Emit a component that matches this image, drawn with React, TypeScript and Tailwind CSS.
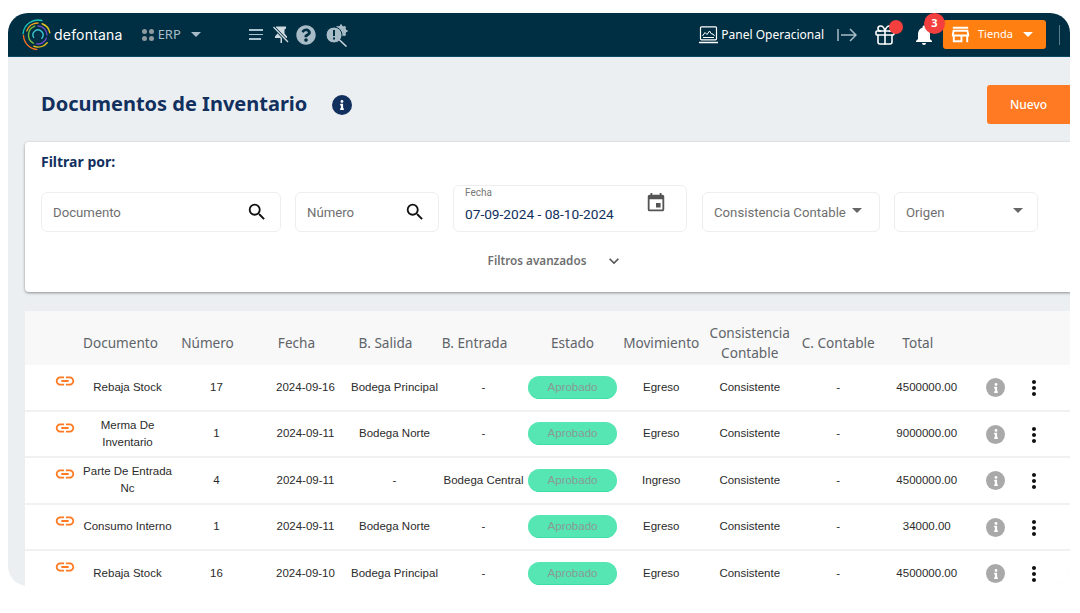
import type { ReactNode } from "react";
import { Gift } from "lucide-react";
import { MdSearch, MdEvent, MdLink, MdMoreVert, MdOutlineStore, MdKeyboardArrowDown, MdNotifications } from "react-icons/md";
import { FaQuestionCircle, FaInfo } from "react-icons/fa";

const rows = [
  { doc: "Rebaja Stock", num: "17", fecha: "2024-09-16", salida: "Bodega Principal", entrada: "-", mov: "Egreso", total: "4500000.00" },
  { doc: "Merma De Inventario", num: "1", fecha: "2024-09-11", salida: "Bodega Norte", entrada: "-", mov: "Egreso", total: "9000000.00" },
  { doc: "Parte De Entrada Nc", num: "4", fecha: "2024-09-11", salida: "-", entrada: "Bodega Central", mov: "Ingreso", total: "4500000.00" },
  { doc: "Consumo Interno", num: "1", fecha: "2024-09-11", salida: "Bodega Norte", entrada: "-", mov: "Egreso", total: "34000.00" },
  { doc: "Rebaja Stock", num: "16", fecha: "2024-09-10", salida: "Bodega Principal", entrada: "-", mov: "Egreso", total: "4500000.00" },
];

const cols = "grid grid-cols-[58px_repeat(6,89px)_repeat(4,88.5px)_49px_28px] items-center";

// arc around the logo centre, angles in degrees (0 = right, clockwise)
const arc = (r: number, from: number, to: number) => {
  const p = (a: number) => `${16 + r * Math.cos((a * Math.PI) / 180)} ${16 + r * Math.sin((a * Math.PI) / 180)}`;
  return `M${p(from)} A${r} ${r} 0 ${to - from > 180 ? 1 : 0} 1 ${p(to)}`;
};

const Logo = () => (
  <svg width="32" height="32" viewBox="0 0 32 32" fill="none" strokeLinecap="round" strokeWidth="1.4">
    <path d={arc(15, 185, 285)} stroke="#1cc4b8" />
    <path d={arc(14.5, 95, 178)} stroke="#f2701d" />
    <path d={arc(12, 290, 350)} stroke="#e8c51e" />
    <path d={arc(12, 200, 270)} stroke="#f2a01d" />
    <path d={arc(12, 40, 110)} stroke="#e8c51e" />
    <path d={arc(9.5, 120, 250)} stroke="#7fbf3f" />
    <path d={arc(9, 270, 360)} stroke="#6d4bc4" />
    <path d={arc(9, 20, 100)} stroke="#6d4bc4" />
    <path d={arc(5, 150, 400)} stroke="#3fc4cf" />
  </svg>
);

const PinOffIcon = () => (
  <svg width="16" height="17" viewBox="0 0 16 17" className="ml-[10px]">
    <path d="M3 0.5h10v2l-1.5 1v4l2.5 3v1.5H9v5H7.5v-5H2V10.5l2.5-3v-4L3 2.5z" fill="#d0dbe1" />
    <path d="M0.5 1L15 16" stroke="#002e42" strokeWidth="3" />
    <path d="M0.5 1L15 16" stroke="#d0dbe1" strokeWidth="1.3" />
  </svg>
);

const GearSearchIcon = () => (
  <svg width="26" height="24" viewBox="0 0 26 24" className="ml-[8px]">
    <circle cx="17" cy="8" r="4.2" fill="none" stroke="#a8bcc8" strokeWidth="2.4" />
    <path d="M17 1.5v13M10.5 8h13M12.5 3.5l9 9M21.5 3.5l-9 9" stroke="#a8bcc8" strokeWidth="2" />
    <circle cx="10" cy="12" r="8" fill="#a8bcc8" stroke="#002e42" strokeWidth="1" />
    <path d="M10 7v6M10 14.6v2" stroke="#002e42" strokeWidth="2" />
    <path d="M15.5 17l7 6.5" stroke="#c9d6dd" strokeWidth="1.6" />
  </svg>
);

const PanelIcon = () => (
  <svg width="19" height="18" viewBox="0 0 19 18" fill="none" stroke="#fff" strokeWidth="1.2">
    <rect x="1.5" y="0.8" width="16" height="13" rx="1" />
    <path d="M3.5 10l2.5-3.5 2 2 2.5-3.5 2 3h1.5l1.5 2M4 11.5h11" strokeWidth="1" />
    <path d="M0 16.5h19" strokeWidth="1.6" />
  </svg>
);

const FilterBox = ({ className, children }: { className: string; children: ReactNode }) => (
  <div className={`h-10 rounded-md border border-[#eeeeee] bg-white flex items-center font-['Roboto',sans-serif] text-[13.2px] text-[#6f6f6f] ${className}`}>
    {children}
  </div>
);

export default function App() {
  return (
    <div className="w-[1080px] h-[613px] bg-white pt-[13px] pl-2 overflow-hidden">
      <div className="w-[1062px] h-[573px] rounded-[20px] overflow-hidden bg-[#ebeff2] flex flex-col">
        {/* top bar */}
        <header className="h-11 shrink-0 bg-[#002e42] border-b border-[#0a4a63] flex items-center text-white font-['Noto_Sans',sans-serif]">
          <div className="ml-[14px]"><Logo /></div>
          <span className="text-[14px] font-['Inter',sans-serif] tracking-[0.2px]">defontana</span>
          <div className="ml-[19px] grid grid-cols-2 gap-[2px]">
            <span className="w-[5px] h-[5px] rounded-full bg-[#8f9a9f]" />
            <span className="w-[5px] h-[5px] rounded-full bg-[#8f9a9f]" />
            <span className="w-[5px] h-[5px] rounded-full bg-[#8f9a9f]" />
            <span className="w-[5px] h-[5px] rounded-full bg-[#8f9a9f]" />
          </div>
          <span className="ml-[4px] text-[13px] text-[#a8bcc8]">ERP</span>
          <span className="ml-[10px] w-0 h-0 border-x-[5.5px] border-x-transparent border-t-[5.5px] border-t-[#a8bcc8]" />
          <div className="ml-[48px] w-[14px] flex flex-col gap-[3px]">
            <span className="h-[1.5px] bg-[#a8c4d0]" />
            <span className="h-[1.5px] bg-[#a8c4d0]" />
            <span className="h-[1.5px] w-[12px] bg-[#a8c4d0]" />
          </div>
          <PinOffIcon />
          <FaQuestionCircle size={20} className="ml-[7px] text-[#a8bcc8]" />
          <GearSearchIcon />
          <div className="flex-1" />
          <PanelIcon />
          <span className="ml-[3px] text-[12px] text-white">Panel Operacional</span>
          <svg width="20" height="14" viewBox="0 0 20 14" className="ml-[13px]" fill="none" stroke="#a8bcc8" strokeWidth="1.5"><path d="M1 1v12M4 7h15M13 1l6 6-6 6" /></svg>
          <div className="relative ml-[16px]">
            <Gift size={24} strokeWidth={1.6} />
            <span className="absolute -top-[3px] left-[16px] w-[14px] h-[14px] rounded-full bg-[#f43f3f]" />
          </div>
          <div className="relative ml-[15px]">
            <MdNotifications size={24} />
            <span className="absolute -top-[10px] left-[12px] w-[21px] h-[21px] rounded-full bg-[#f43f3f] text-[11px] font-bold flex items-center justify-center">3</span>
          </div>
          <button className="ml-[7px] w-[103px] h-[29px] rounded-[3px] bg-[#ff7f11] flex items-center pl-[6px] text-[11px]">
            <MdOutlineStore size={23} />
            <span className="ml-[6px]">Tienda</span>
            <span className="ml-[10px] w-0 h-0 border-x-[5.5px] border-x-transparent border-t-[5.5px] border-t-white" />
          </button>
          <span className="ml-[13px] w-px h-5 bg-[#5c7c8c]" />
          <div className="w-[10px]" />
        </header>

        {/* title */}
        <div className="h-[85px] shrink-0 flex items-start relative font-['Noto_Sans',sans-serif]">
          <h1 className="ml-[33px] mt-[32px] text-[20px] font-bold text-[#12305e]">Documentos de Inventario</h1>
          <span className="ml-[25px] mt-[38px] w-5 h-5 rounded-full bg-[#12305e] text-white flex items-center justify-center"><FaInfo size={10} /></span>
          <div className="flex-1" />
          <button className="mt-[28px] w-[83px] h-[39px] rounded-l-[3px] bg-[#ff7a22] text-white text-[12px] font-medium">Nuevo</button>
        </div>

        {/* filters */}
        <section className="ml-[17px] w-[1060px] h-[150px] shrink-0 rounded-l-[4px] bg-white shadow-[0_1px_3px_rgba(0,0,0,0.4)] pl-[16px] pt-[9px]">
          <h2 className="font-['Noto_Sans',sans-serif] text-[14px] font-bold text-[#12305e]">Filtrar por:</h2>
          <div className="mt-[13px] flex items-end h-[47px]">
            <FilterBox className="w-[240px] pl-[11px] pr-[12px] justify-between">
              <span className="mt-[2px]">Documento</span><MdSearch size={22} className="text-[#111]" />
            </FilterBox>
            <FilterBox className="ml-[14px] w-[144px] pl-[11px] pr-[12px] justify-between">
              <span className="mt-[2px]">Número</span><MdSearch size={22} className="text-[#111]" />
            </FilterBox>
            <div className="ml-[14px] w-[234px] h-[47px] relative rounded-md border border-[#eeeeee] font-['Roboto',sans-serif] pl-[11px]">
              <div className="-mt-[1px] text-[10px] text-[#777]">Fecha</div>
              <div className="mt-[4px] text-[13.7px] text-[#12305e]">07-09-2024 - 08-10-2024</div>
              <MdEvent size={22} className="absolute right-[19px] top-[6px] text-[#555]" />
            </div>
            <FilterBox className="ml-[15px] w-[178px] pl-[11px] relative">
              <span className="mt-[2px]">Consistencia Contable</span>
              <span className="ml-[6px] -mt-[4px] w-0 h-0 border-x-[5px] border-x-transparent border-t-[5px] border-t-[#666]" />
            </FilterBox>
            <FilterBox className="ml-[14px] w-[144px] pl-[11px] justify-between pr-[14px]">
              <span className="mt-[2px]">Origen</span>
              <span className="-mt-[4px] w-0 h-0 border-x-[5px] border-x-transparent border-t-[5px] border-t-[#666]" />
            </FilterBox>
          </div>
          <div className="mt-[19px] flex items-center w-[1030px] justify-center font-['Noto_Sans',sans-serif] text-[11.7px] font-semibold text-[#6f6f6f]">
            <span>Filtros avanzados</span>
            <MdKeyboardArrowDown size={20} className="ml-[18px] text-[#555]" />
          </div>
        </section>

        {/* table */}
        <section className="ml-[17px] mt-[19px] w-[1060px] flex-1 bg-white">
          <div className={`${cols} h-[54px] pt-[10px] bg-[#f8f8f8] font-['Noto_Sans',sans-serif] text-[13.6px] leading-[20px] text-[#5f6468] text-center`}>
            <span />
            <span className="pr-[18px]">Documento</span>
            <span className="pr-[18px]">Número</span>
            <span className="pr-[18px]">Fecha</span>
            <span className="pr-[18px]">B. Salida</span>
            <span className="pr-[18px]">B. Entrada</span>
            <span>Estado</span>
            <span>Movimiento</span>
            <span>Consistencia Contable</span>
            <span>C. Contable</span>
            <span className="pr-[18px]">Total</span>
          </div>
          {rows.map((r, i) => (
            <div key={i} className={`${cols} h-[46.5px] border-b-2 border-[#f1f1f1] font-['Liberation_Sans',sans-serif] text-[11.5px] leading-[17px] text-[#2b2b2b] text-center`}>
              <span className="pl-[22px] -mt-[12px] flex justify-center"><MdLink size={22} className="text-[#ff7a22]" /></span>
              <span>{r.doc}</span>
              <span>{r.num}</span>
              <span>{r.fecha}</span>
              <span>{r.salida}</span>
              <span>{r.entrada}</span>
              <span className="h-[23px] rounded-full bg-[#55e6b4] border-b border-[#3ddfa8] text-[#8a9a94] leading-[23px]">Aprobado</span>
              <span>{r.mov}</span>
              <span>Consistente</span>
              <span>-</span>
              <span>{r.total}</span>
              <span className="flex justify-center mt-[1px]"><span className="w-[19px] h-[19px] rounded-full bg-[#a9a9a9] text-white flex items-center justify-center"><FaInfo size={10} /></span></span>
              <span className="flex justify-center mt-[2px]"><MdMoreVert size={24} className="text-[#111]" /></span>
            </div>
          ))}
        </section>
      </div>
    </div>
  );
}
